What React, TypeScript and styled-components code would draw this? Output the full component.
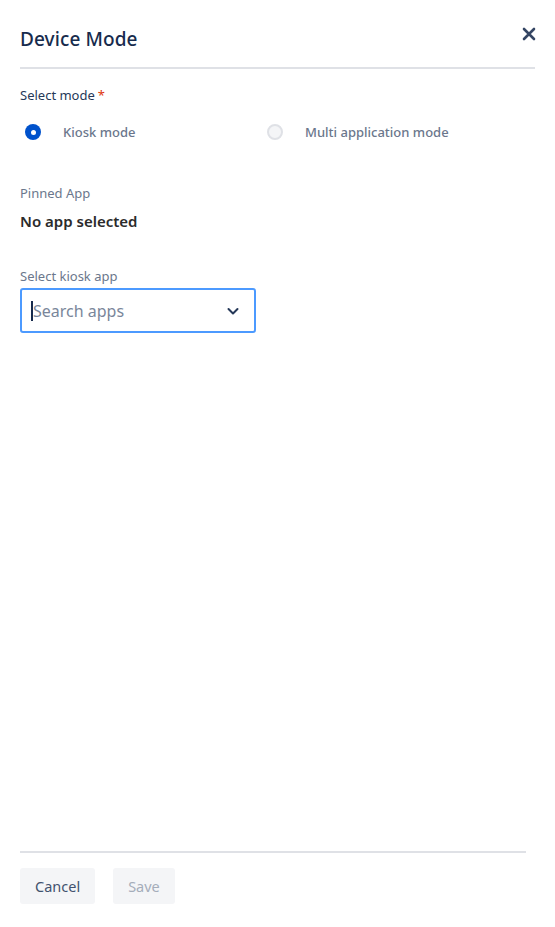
import React from "react";
import styled, { createGlobalStyle } from "styled-components";

const GlobalStyle = createGlobalStyle`
  html, body {
    margin: 0;
    padding: 0;
    background: #ffffff;
  }
  body {
    font-family: "Noto Sans", "Open Sans", "Liberation Sans", sans-serif;
    -webkit-font-smoothing: antialiased;
  }
`;

const Drawer = styled.div`
  display: flex;
  flex-direction: column;
  height: 927px;
  box-sizing: border-box;
`;

const Header = styled.div`
  display: flex;
  align-items: center;
  justify-content: space-between;
  margin: 0 20px;
  height: 69px;
  border-bottom: 2px solid #dfe1e6;
  box-sizing: border-box;
  padding-top: 10px;
`;

const Title = styled.h2`
  margin: 0;
  font-size: 19px;
  font-weight: 500;
  color: #172b4d;
  letter-spacing: 0.1px;
`;

const CloseButton = styled.button`
  border: 0;
  background: none;
  padding: 0;
  margin-right: -2px;
  margin-top: -10px;
  display: flex;
  cursor: pointer;
`;

const Body = styled.div`
  flex: 1;
  padding: 17px 20px 0;
  display: flex;
  flex-direction: column;
`;

const Label = styled.div<{ $tone?: "dark" | "muted" }>`
  font-size: 13px;
  line-height: 18px;
  color: ${({ $tone }) => ($tone === "dark" ? "#253858" : "#6b778c")};
`;

const Required = styled.span`
  color: #de350b;
  margin-left: 3px;
`;

const RadioGroup = styled.div`
  display: grid;
  grid-template-columns: 242px 1fr;
  margin-top: 18px;
  padding-left: 5px;
`;

const RadioOption = styled.label`
  display: flex;
  align-items: center;
  gap: 22px;
  font-size: 13px;
  font-weight: 500;
  color: #6b778c;
  height: 20px;
`;

const RadioDot = styled.span<{ $checked?: boolean }>`
  width: 16px;
  height: 16px;
  border-radius: 50%;
  box-sizing: border-box;
  flex-shrink: 0;
  ${({ $checked }) =>
    $checked
      ? `background: #0052cc;
         display: flex;
         align-items: center;
         justify-content: center;
         &::after { content: ""; width: 5px; height: 5px; border-radius: 50%; background: #fff; }`
      : `background: #f4f5f7; border: 2px solid #dfe1e6;`}
`;

const Section = styled.div<{ $gap: number }>`
  margin-top: ${({ $gap }) => $gap}px;
`;

const Value = styled.div`
  margin-top: 9px;
  font-size: 15px;
  font-weight: 600;
  color: #2b2b2b;
`;

const SelectBox = styled.div`
  margin-top: 3px;
  width: 236px;
  height: 45px;
  box-sizing: border-box;
  border: 2px solid #4c9aff;
  border-radius: 3px;
  display: flex;
  align-items: center;
  padding: 0 13px 0 9px;
`;

const SearchInput = styled.input`
  flex: 1;
  min-width: 0;
  width: 0;
  border: 0;
  outline: none;
  font-family: inherit;
  font-size: 16px;
  color: #172b4d;
  background: transparent;
  padding: 0;
  &::placeholder {
    color: #7a869a;
  }
`;

const Caret = styled.span`
  flex-shrink: 0;
  width: 2px;
  height: 20px;
  background: #172b4d;
`;

const Footer = styled.div`
  margin: 0 29px 0 20px;
  border-top: 2px solid #dfe1e6;
  padding: 15px 0 23px;
  display: flex;
  gap: 18px;
`;

const Button = styled.button<{ $disabled?: boolean }>`
  height: 36px;
  padding: 0 15px;
  border: 0;
  border-radius: 3px;
  background: #f4f5f7;
  font-family: inherit;
  font-size: 14.5px;
  color: ${({ $disabled }) => ($disabled ? "#a5adba" : "#42526e")};
  cursor: ${({ $disabled }) => ($disabled ? "not-allowed" : "pointer")};
`;

export default function App() {
  return (
    <>
      <GlobalStyle />
      <Drawer>
        <Header>
          <Title>Device Mode</Title>
          <CloseButton aria-label="Close">
            <svg width="16" height="16" viewBox="0 0 16 16">
              <path
                d="M3 3 L13 13 M13 3 L3 13"
                stroke="#344563"
                strokeWidth="2.6"
                strokeLinecap="round"
              />
            </svg>
          </CloseButton>
        </Header>
        <Body>
          <Label $tone="dark">
            Select mode<Required>*</Required>
          </Label>
          <RadioGroup>
            <RadioOption>
              <RadioDot $checked />
              Kiosk mode
            </RadioOption>
            <RadioOption>
              <RadioDot />
              Multi application mode
            </RadioOption>
          </RadioGroup>
          <Section $gap={42}>
            <Label>Pinned App</Label>
            <Value>No app selected</Value>
          </Section>
          <Section $gap={36}>
            <Label>Select kiosk app</Label>
            <SelectBox>
              <Caret />
              <SearchInput placeholder="Search apps" />
              <svg width="16" height="16" viewBox="0 0 16 16">
                <path
                  d="M3.5 6 L8 10.5 L12.5 6"
                  fill="none"
                  stroke="#253858"
                  strokeWidth="2"
                  strokeLinecap="round"
                  strokeLinejoin="round"
                />
              </svg>
            </SelectBox>
          </Section>
        </Body>
        <Footer>
          <Button>Cancel</Button>
          <Button $disabled>Save</Button>
        </Footer>
      </Drawer>
    </>
  );
}
